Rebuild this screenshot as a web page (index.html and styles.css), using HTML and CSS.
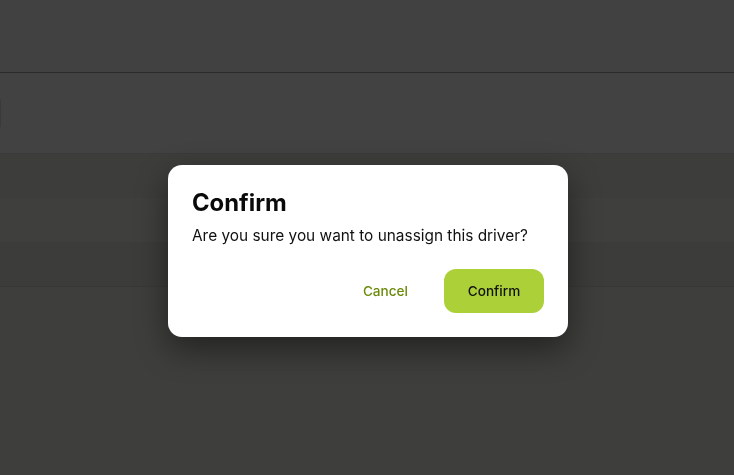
FILE: index.html
```html
<!DOCTYPE html>
<html lang="en">
<head>
  <meta charset="UTF-8" />
  <title>Drivers - Unassign</title>
  <link rel="stylesheet" href="styles.css">
</head>
<body>

  <header class="topbar"></header>

  <main class="page">
    <section class="summary">
      <div class="summary-edge"></div>
    </section>
    <div class="table">
      <div class="row row-dark"></div>
      <div class="row"></div>
      <div class="row row-dark row-last"></div>
    </div>
  </main>

  <div class="overlay">
    <div class="modal" role="dialog" aria-labelledby="modal-title">
      <h2 id="modal-title">Confirm</h2>
      <p>Are you sure you want to unassign this driver?</p>
      <div class="modal-actions">
        <button class="btn btn-text">Cancel</button>
        <button class="btn btn-primary">Confirm</button>
      </div>
    </div>
  </div>

</body>
</html>
```

FILE: styles.css
```css
* {
  box-sizing: border-box;
}

body {
  margin: 0;
  padding: 0;
  font-family: Inter, 'Noto Sans', sans-serif;
  background-color: #3e3e3c;
  min-height: 100vh;
}

.topbar {
  height: 73px;
  background-color: #414141;
  border-bottom: 1px solid #2a2a2a;
}

.summary {
  height: 81px;
  background-color: #424242;
  border-bottom: 1px solid #3a3a3a;
  display: flex;
  align-items: center;
}

.summary-edge {
  width: 1px;
  height: 28px;
  background-color: #3a3a3a;
}

.row {
  height: 44px;
  background-color: #3f3f3e;
}

.row-dark {
  background-color: #3d3d3b;
}

.row-last {
  height: 45px;
  background-color: #3c3c3a;
  border-bottom: 1px solid #383837;
}

/* modal */
.overlay {
  position: fixed;
  inset: 0;
  display: flex;
  justify-content: center;
  align-items: flex-start;
  padding: 165px 0 0 2px;
}

.modal {
  width: 400px;
  background-color: #fff;
  border-radius: 14px;
  padding: 24px;
  box-shadow: 0 12px 32px rgba(0, 0, 0, 0.45);
}

.modal h2 {
  margin: 0;
  font-size: 23.8px;
  line-height: 28px;
  font-weight: 700;
  color: #0a0a0a;
}

.modal p {
  margin: 8px 0 0;
  font-size: 15.4px;
  line-height: 22px;
  color: #111;
}

.modal-actions {
  display: flex;
  justify-content: flex-end;
  gap: 12px;
  margin-top: 22px;
}

.btn {
  height: 44px;
  padding: 0 24px;
  border: none;
  border-radius: 12px;
  font-family: inherit;
  font-size: 13.6px;
  font-weight: 500;
  cursor: pointer;
}

.btn-text {
  background: none;
  color: #6b8a0a;
}

.btn-primary {
  width: 100px;
  padding: 0;
  background-color: #acd037;
  color: #111;
}
```
